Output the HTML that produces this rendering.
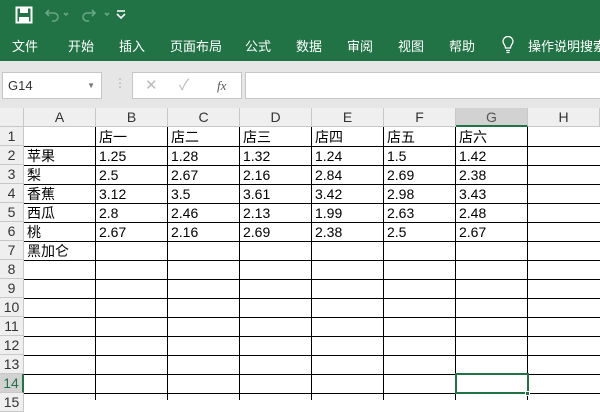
<!DOCTYPE html>
<html><head><meta charset="utf-8"><style>
*{margin:0;padding:0;box-sizing:border-box}
body{width:600px;height:400px;overflow:hidden;background:#fff;font-family:"Liberation Sans","Noto Sans CJK SC",sans-serif;position:relative}
.g{position:absolute;left:0;top:0;width:600px;height:61px;background:#217346}
.tab{position:absolute;top:36px;color:#fff;font-size:13px;white-space:nowrap}
.bar{position:absolute;left:0;top:61px;width:600px;height:47px;background:#e6e6e6}
.box{position:absolute;background:#fff;border:1px solid #c6c6c6}
.ch{position:absolute;top:108px;height:19px;background:#efefef;border-right:1px solid #c8c8c8;border-bottom:1px solid #c8c8c8;font-size:14px;color:#333;text-align:center;line-height:19px}
.rh{position:absolute;left:0;width:24px;height:19px;background:#efefef;border-bottom:1px solid #c8c8c8;border-right:1px solid #c8c8c8;font-size:14px;color:#333;text-align:center;line-height:19px}
.c{position:absolute;font-size:14px;color:#000;line-height:20px;padding-left:3px;height:19px}
.vl{position:absolute;top:127px;width:1px;height:273px;background:#000}
.hl{position:absolute;left:24px;width:576px;height:1px;background:#000}
</style></head><body>
<div class="g"></div>
<svg style="position:absolute;left:15px;top:6px" width="18" height="18" viewBox="0 0 18 18"><rect x="1.5" y="1.5" width="15" height="15" fill="none" stroke="#fff" stroke-width="2"/><rect x="5" y="2" width="8" height="5" fill="#fff"/><rect x="4" y="11" width="10" height="5" fill="#fff"/></svg>
<svg style="position:absolute;left:44px;top:5px" width="90" height="18" viewBox="0 0 90 18" fill="none" stroke="#6aa585" stroke-width="1.6"><path d="M5 5 L2 8 L5 11 M2 8 H10 a4 4 0 0 1 0 8 H8"/><path d="M20 8 l2 2 l2 -2"/><path d="M48 5 L51 8 L48 11 M51 8 H43 a4 4 0 0 0 0 8 H45"/><path d="M61 8 l2 2 l2 -2"/><path d="M73 6 h8 M73 9 l4 4 l4 -4" stroke="#fff"/></svg>
<div class="tab" style="left:12px">文件</div>
<div class="tab" style="left:68px">开始</div>
<div class="tab" style="left:119px">插入</div>
<div class="tab" style="left:170px">页面布局</div>
<div class="tab" style="left:245px">公式</div>
<div class="tab" style="left:296px">数据</div>
<div class="tab" style="left:347px">审阅</div>
<div class="tab" style="left:398px">视图</div>
<div class="tab" style="left:449px">帮助</div>
<svg style="position:absolute;left:501px;top:36px" width="14" height="18" viewBox="0 0 14 18" fill="none" stroke="#fff" stroke-width="1.3"><path d="M4.5 12 C4.5 9 2 8 2 5.5 a5 5 0 0 1 10 0 C12 8 9.5 9 9.5 12 Z M5 14.5 h4 M5.5 16.5 h3"/></svg>
<div class="tab" style="left:528px">操作说明搜索</div>
<div class="bar"></div>
<div class="box" style="left:2px;top:72px;width:100px;height:27px;font-size:13px;line-height:25px;padding-left:5px;color:#333">G14<span style="position:absolute;right:6px;font-size:8px;color:#777">▼</span></div>
<div style="position:absolute;left:114px;top:76px;color:#aaa;font-size:12px">⋮</div>
<div class="box" style="left:132px;top:72px;width:110px;height:27px;color:#bbb;font-size:15px;line-height:25px"><span style="position:absolute;left:12px">✕</span><span style="position:absolute;left:46px">✓</span><span style="position:absolute;left:84px;color:#555;font-family:'Liberation Serif',serif;font-style:italic;font-size:13px">fx</span></div>
<div class="box" style="left:245px;top:72px;width:360px;height:27px"></div>
<div class="ch" style="left:0;width:24px"></div>
<div class="ch" style="left:24px;width:72px">A</div>
<div class="ch" style="left:96px;width:72px">B</div>
<div class="ch" style="left:168px;width:72px">C</div>
<div class="ch" style="left:240px;width:72px">D</div>
<div class="ch" style="left:312px;width:72px">E</div>
<div class="ch" style="left:384px;width:72px">F</div>
<div class="ch" style="left:456px;width:72px;background:#d2d2d2;color:#555;border-bottom:2px solid #217346">G</div>
<div class="ch" style="left:528px;width:72px">H</div>
<div class="rh" style="top:127px">1</div><div class="rh" style="top:146px">2</div><div class="rh" style="top:165px">3</div><div class="rh" style="top:184px">4</div><div class="rh" style="top:203px">5</div><div class="rh" style="top:222px">6</div><div class="rh" style="top:241px">7</div><div class="rh" style="top:260px">8</div><div class="rh" style="top:279px">9</div><div class="rh" style="top:298px">10</div><div class="rh" style="top:317px">11</div><div class="rh" style="top:336px">12</div><div class="rh" style="top:355px">13</div><div class="rh" style="top:374px;background:#d2d2d2;color:#217346;border-right:2px solid #217346">14</div><div class="rh" style="top:393px">15</div>
<div class="vl" style="left:95px"></div><div class="vl" style="left:167px"></div><div class="vl" style="left:239px"></div><div class="vl" style="left:311px"></div><div class="vl" style="left:383px"></div><div class="vl" style="left:455px"></div><div class="vl" style="left:527px"></div>
<div class="hl" style="top:146px"></div><div class="hl" style="top:165px"></div><div class="hl" style="top:184px"></div><div class="hl" style="top:203px"></div><div class="hl" style="top:222px"></div><div class="hl" style="top:241px"></div><div class="hl" style="top:260px"></div><div class="hl" style="top:279px"></div><div class="hl" style="top:298px"></div><div class="hl" style="top:317px"></div><div class="hl" style="top:336px"></div><div class="hl" style="top:355px"></div><div class="hl" style="top:374px"></div><div class="hl" style="top:393px"></div>
<div class="c" style="left:96px;top:127px">店一</div><div class="c" style="left:168px;top:127px">店二</div><div class="c" style="left:240px;top:127px">店三</div><div class="c" style="left:312px;top:127px">店四</div><div class="c" style="left:384px;top:127px">店五</div><div class="c" style="left:456px;top:127px">店六</div>
<div class="c" style="left:24px;top:146px">苹果</div><div class="c" style="left:96px;top:146px">1.25</div><div class="c" style="left:168px;top:146px">1.28</div><div class="c" style="left:240px;top:146px">1.32</div><div class="c" style="left:312px;top:146px">1.24</div><div class="c" style="left:384px;top:146px">1.5</div><div class="c" style="left:456px;top:146px">1.42</div>
<div class="c" style="left:24px;top:165px">梨</div><div class="c" style="left:96px;top:165px">2.5</div><div class="c" style="left:168px;top:165px">2.67</div><div class="c" style="left:240px;top:165px">2.16</div><div class="c" style="left:312px;top:165px">2.84</div><div class="c" style="left:384px;top:165px">2.69</div><div class="c" style="left:456px;top:165px">2.38</div>
<div class="c" style="left:24px;top:184px">香蕉</div><div class="c" style="left:96px;top:184px">3.12</div><div class="c" style="left:168px;top:184px">3.5</div><div class="c" style="left:240px;top:184px">3.61</div><div class="c" style="left:312px;top:184px">3.42</div><div class="c" style="left:384px;top:184px">2.98</div><div class="c" style="left:456px;top:184px">3.43</div>
<div class="c" style="left:24px;top:203px">西瓜</div><div class="c" style="left:96px;top:203px">2.8</div><div class="c" style="left:168px;top:203px">2.46</div><div class="c" style="left:240px;top:203px">2.13</div><div class="c" style="left:312px;top:203px">1.99</div><div class="c" style="left:384px;top:203px">2.63</div><div class="c" style="left:456px;top:203px">2.48</div>
<div class="c" style="left:24px;top:222px">桃</div><div class="c" style="left:96px;top:222px">2.67</div><div class="c" style="left:168px;top:222px">2.16</div><div class="c" style="left:240px;top:222px">2.69</div><div class="c" style="left:312px;top:222px">2.38</div><div class="c" style="left:384px;top:222px">2.5</div><div class="c" style="left:456px;top:222px">2.67</div>
<div class="c" style="left:24px;top:241px">黑加仑</div>
<div style="position:absolute;left:455px;top:373px;width:74px;height:21px;border:2px solid #217346"></div>
<div style="position:absolute;left:525px;top:391px;width:5px;height:5px;background:#217346;border:1px solid #fff"></div>
</body></html>
